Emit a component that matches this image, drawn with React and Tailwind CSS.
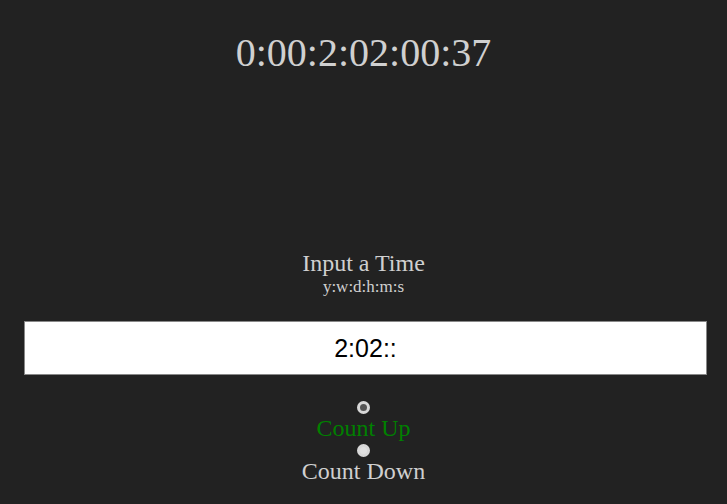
import { useState } from "react";

export default function App() {
  const [mode, setMode] = useState("up");
  const [value, setValue] = useState("2:02::");

  return (
    <div className="bg-[#222222] min-h-screen text-[#d0d0d0] font-['Liberation_Serif',serif] text-center">
      {/* Timer */}
      <div className="pt-[31px] text-[40px] leading-[44px]">0:00:2:02:00:37</div>

      {/* Input */}
      <div className="mt-[175px] text-[24px] leading-[27px]">Input a Time</div>
      <div className="text-[17px] leading-[19px]">y:w:d:h:m:s</div>
      <input
        value={value}
        onChange={(e) => setValue(e.target.value)}
        className="block mt-[25px] ml-[24px] w-[683px] h-[54px] bg-white border border-[#888] text-black text-center text-[25px] font-['Liberation_Sans',sans-serif] outline-none"
      />

      {/* Mode */}
      <div className="flex flex-col items-center mt-[26px]">
        <input
          type="radio"
          name="mode"
          checked={mode === "up"}
          onChange={() => setMode("up")}
          className="appearance-none w-[13px] h-[13px] rounded-full bg-[#e0e0e0] border-[3px] border-[#d8d8d8] checked:bg-[#555] m-0"
        />
        <label className={`mb-[1px] text-[24px] leading-[29px] ${mode === "up" ? "text-[#008000]" : ""}`}>
          Count Up
        </label>
        <input
          type="radio"
          name="mode"
          checked={mode === "down"}
          onChange={() => setMode("down")}
          className="appearance-none w-[13px] h-[13px] rounded-full bg-[#e0e0e0] border-[3px] border-[#d8d8d8] checked:bg-[#555] m-0"
        />
        <label className={`text-[24px] leading-[29px] ${mode === "down" ? "text-[#008000]" : ""}`}>
          Count Down
        </label>
      </div>
    </div>
  );
}
